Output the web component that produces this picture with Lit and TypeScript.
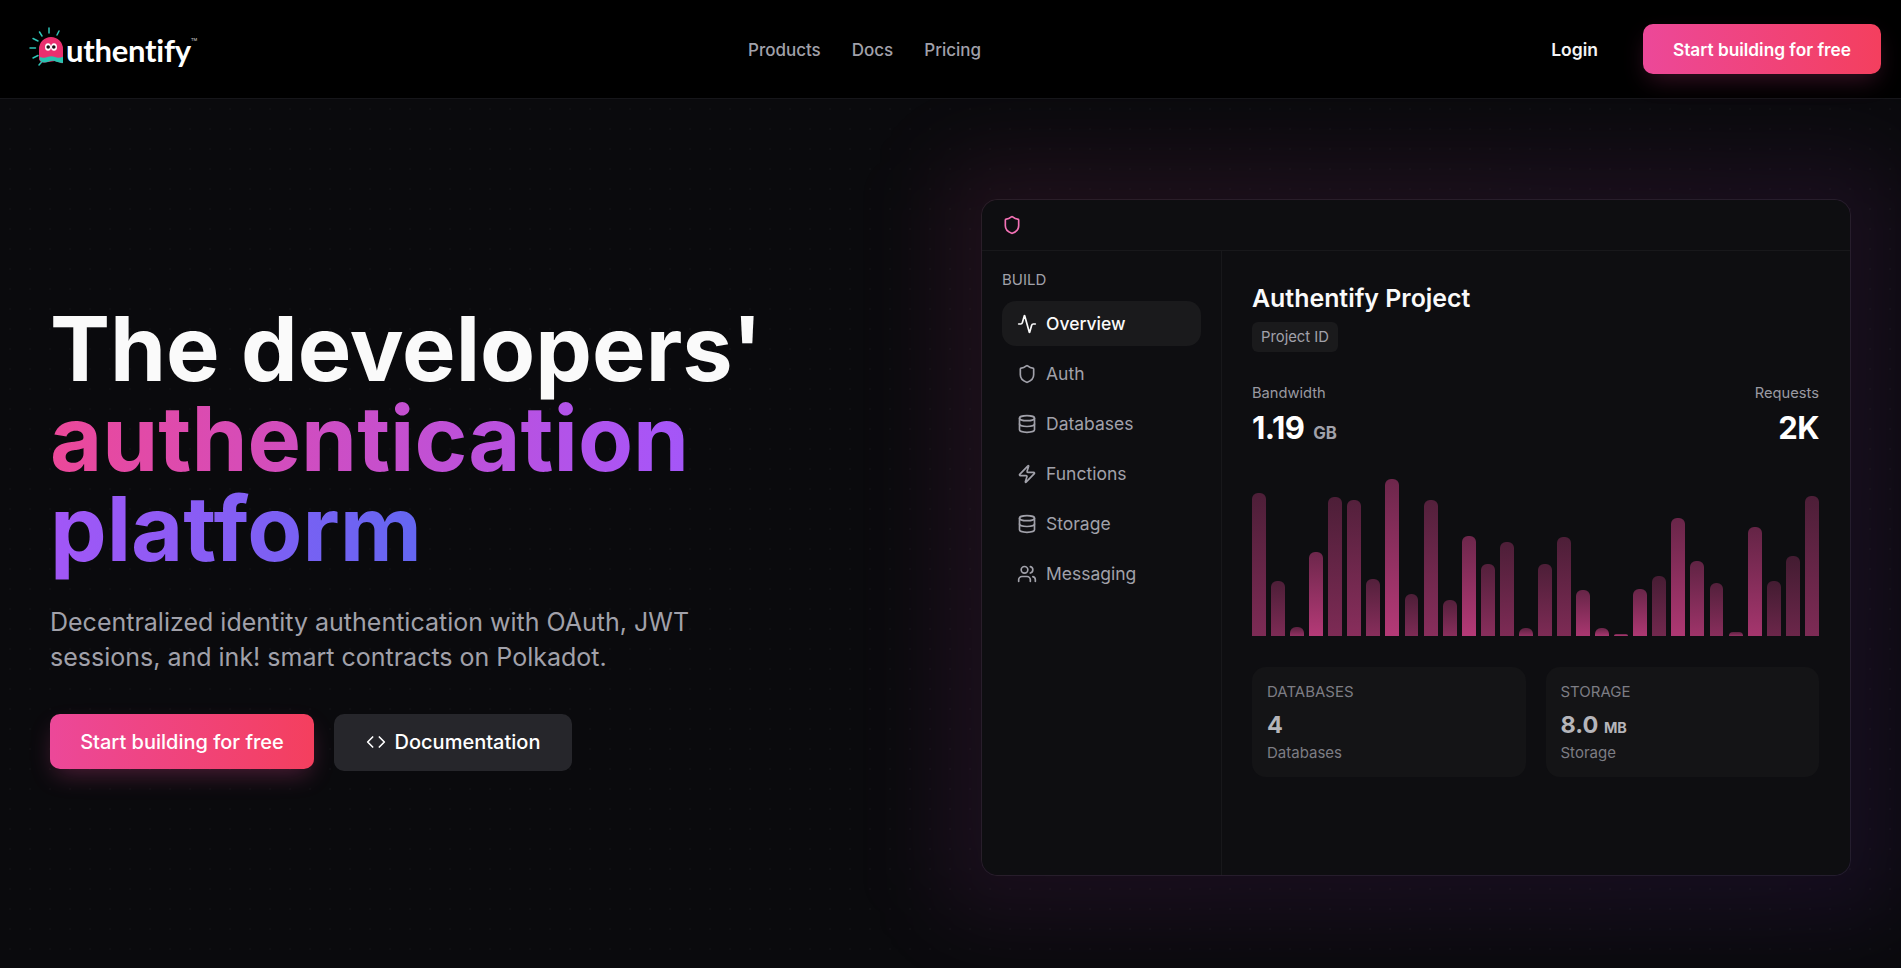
import { LitElement, html, css, svg } from "lit";
import { customElement } from "lit/decorators.js";

const FONT = css`Inter, "Noto Sans", sans-serif`;

const icon = (paths: unknown, size = 18) => html`<svg class="ic" width=${size} height=${size} viewBox="0 0 24 24" fill="none" stroke="currentColor" stroke-width="2" stroke-linecap="round" stroke-linejoin="round">${paths}</svg>`;

const shield = svg`<path d="M20 13c0 5-3.5 7.5-7.66 8.95a1 1 0 0 1-.67-.01C7.5 20.5 4 18 4 13V6a1 1 0 0 1 1-1c2 0 4.5-1.2 6.24-2.72a1.17 1.17 0 0 1 1.52 0C14.51 3.81 17 5 19 5a1 1 0 0 1 1 1z"/>`;
const activity = svg`<path d="M22 12h-2.48a2 2 0 0 0-1.93 1.46l-2.35 8.36a.25.25 0 0 1-.48 0L9.24 2.18a.25.25 0 0 0-.48 0l-2.35 8.36A2 2 0 0 1 4.49 12H2"/>`;
const db = svg`<ellipse cx="12" cy="5" rx="9" ry="3"/><path d="M3 5v14a9 3 0 0 0 18 0V5"/><path d="M3 12a9 3 0 0 0 18 0"/>`;
const zap = svg`<path d="M4 14a1 1 0 0 1-.78-1.63l9.9-10.2a.5.5 0 0 1 .86.46l-1.92 6.02A1 1 0 0 0 13 10h7a1 1 0 0 1 .78 1.63l-9.9 10.2a.5.5 0 0 1-.86-.46l1.92-6.02A1 1 0 0 0 11 14z"/>`;
const users = svg`<path d="M16 21v-2a4 4 0 0 0-4-4H6a4 4 0 0 0-4 4v2"/><circle cx="9" cy="7" r="4"/><path d="M22 21v-2a4 4 0 0 0-3-3.87"/><path d="M16 3.13a4 4 0 0 1 0 7.75"/>`;
const code = svg`<path d="m16 18 6-6-6-6"/><path d="m8 6-6 6 6 6"/>`;

const nav = [
  ["Overview", activity],
  ["Auth", shield],
  ["Databases", db],
  ["Functions", zap],
  ["Storage", db],
  ["Messaging", users],
] as const;

// [bar height in px, opacity]
const bars: [number, number][] = [
  [143, 0.5], [55, 0.5], [9, 0.6], [84, 0.75], [139, 0.5], [136, 0.55], [57, 0.55], [157, 0.75], [42, 0.5], [136, 0.55],
  [36, 0.55], [100, 0.75], [72, 0.55], [94, 0.5], [8, 0.6], [72, 0.5], [99, 0.5], [46, 0.7], [8, 0.7], [2, 0.75],
  [47, 0.72], [60, 0.45], [118, 0.72], [75, 0.65], [53, 0.55], [4, 0.6], [109, 0.68], [55, 0.42], [80, 0.42], [140, 0.5],
];

@customElement("app-logo")
export class AppLogo extends LitElement {
  static styles = css`
    :host { display: inline-flex; align-items: flex-start; color: #fff; height: 42px; width: 170px; margin-top: 1px; }
    svg { flex: none; }
    .word { font: 700 31px/1 Lato, ${FONT}; letter-spacing: -0.25px; margin: 8px 0 0 1px; }
    .tm { font: 500 4px/1 ${FONT}; color: #bbb; margin: 11px 0 0 0; }
  `;
  render() {
    return html`<svg width="37" height="42" viewBox="0 0 37 42" fill="none">
        <g stroke="#2ec4b6" stroke-width="1.5" stroke-linecap="round">
          <path d="M2 21h5.500M5 11.500l5 2.500M11.500 5l2.500 4M21 1v5M31 4l-2 4M5 31l5-2.500M11 38l3.500-4" />
        </g>
        <path d="M11 22a12 12 0 0 1 24 0V35.500c0 .5-.5 .8-1 .7l-7-2.200-10 1.500C13.500 36 11 34 11 31.500z" fill="#ea2f6f"/>
        <path d="M12 30c3 1.500 5.500 .5 8-.3 3-1 5-.5 7 .3 2.500 1 5.500 .8 8-.2V36c-3-.2-6-1-8.500-2-4-1.200-6.500 1.600-10.500 1.600-2 0-3.500-1-4.500-3z" fill="#27c3b0"/>
        <ellipse cx="20" cy="20" rx="3" ry="3.800" fill="#fff"/><ellipse cx="26" cy="20" rx="3" ry="3.800" fill="#fff"/>
        <circle cx="20.200" cy="20" r="1.800" fill="#1c1116"/><circle cx="25.800" cy="20" r="1.800" fill="#1c1116"/>
      </svg><span class="word">uthentify</span><span class="tm">TM</span>`;
  }
}

@customElement("app-root")
export class AppRoot extends LitElement {
  static styles = css`
    :host { display: block; width: 100%; height: 968px; overflow: hidden; background: #0a0a0d; font-family: ${FONT}; color: #fff; }
    * { box-sizing: border-box; }
    header { position: relative; z-index: 2; height: 99px; background: #000; border-bottom: 1px solid #16161a; display: grid; grid-template-columns: 720px auto 1fr; align-items: center; padding: 0 20px 0 28px; }
    .links { display: flex; gap: 31px; font-size: 17px; font-weight: 500; color: #a1a1aa; padding-top: 1px; }
    .right { display: flex; justify-content: flex-end; align-items: center; gap: 45px; }
    .login { font-size: 17.5px; font-weight: 600; color: #f4f4f5; }
    .btn { display: inline-flex; align-items: center; justify-content: center; border-radius: 10px; font-weight: 600; color: #fff; }
    .primary { background: linear-gradient(90deg, #ec4899, #f43f5e); box-shadow: 0 10px 25px -5px rgba(236, 72, 153, .25); }
    .nav-btn { width: 238px; height: 50px; font-size: 17.3px; }
    .hero { position: relative; height: 869px; display: grid; grid-template-columns: 931px 1fr; padding-left: 50px; padding-right: 50px; overflow: hidden; background:
      radial-gradient(rgba(255,255,255,.018) 1px, transparent 1px) 0 0/20px 20px,
      #0a0a0d; }
    .copy { padding-top: 205px; position: relative; }
    h1 { margin: 0; font-size: 90px; line-height: 90px; font-weight: 750; letter-spacing: 0; color: #fafafa; white-space: nowrap; }
    .grad { background: linear-gradient(90deg, #ec4899, #a855f7 60%, #6366f1); -webkit-background-clip: text; background-clip: text; color: transparent; }
    .sub { margin: 31px 0 0; font-size: 25px; line-height: 35px; color: #a1a1aa; width: 700px; }
    .cta { display: flex; gap: 20px; margin-top: 39px; align-items: flex-start; }
    .cta .btn { font-weight: 500; font-size: 20px; }
    .cta .primary { width: 264px; height: 55px; box-shadow: 0 10px 25px -5px rgba(236, 72, 153, .3); }
    .secondary { width: 238px; height: 57px; padding-bottom: 2px; background: #26262b; gap: 9px; }
    .panel { position: relative; margin-top: 100px; width: 870px; height: 677px; border: 1px solid #1c1c20; border-radius: 16px; background: #0e0e11; display: flex; flex-direction: column; }
    .glow { position: absolute; inset: -45px; border-radius: 40px; background: linear-gradient(135deg, rgba(236, 72, 153, .085), rgba(139, 50, 230, .085)); filter: blur(40px); z-index: 0; }
    .layer { position: relative; z-index: 1; background: #0e0e11; }
    .panel-top { height: 51px; border-bottom: 1px solid #18181b; display: flex; align-items: center; padding-left: 20px; color: #f472b6; flex: none; border-radius: 16px 16px 0 0; }
    .panel-body { flex: 1; display: grid; grid-template-columns: 240px 1fr; border-radius: 0 0 16px 16px; }
    aside { border-right: 1px solid #18181b; padding: 19px 20px 0; }
    .label { font-size: 15px; line-height: 20px; color: #a1a1aa; margin-bottom: 11px; }
    .items { display: flex; flex-direction: column; gap: 5px; }
    .item { height: 45px; border-radius: 14px; display: flex; align-items: center; gap: 9px; padding-left: 15px; font-size: 17.5px; color: #a1a1aa; }
    .item.on { background: #1a1a1c; color: #fafafa; font-weight: 500; }
    .main { padding: 31px 31px 0 30px; }
    h2 { margin: 0; font-size: 24.9px; line-height: 32px; font-weight: 600; color: #fafafa; }
    .chip { display: inline-block; margin-top: 8px; padding: 0 9px; height: 30px; line-height: 30px; font-size: 14.8px; color: #a1a1aa; background: #1a1a1c; border-radius: 6px; }
    .stats { display: flex; justify-content: space-between; margin-top: 31px; }
    .stat-r { text-align: right; }
    .muted { font-size: 14.7px; line-height: 20px; color: #9a9aa2; }
    .big { font-size: 31px; line-height: 36px; font-weight: 700; margin-top: 7px; letter-spacing: -.5px; }
    .big small { font-size: 16.8px; color: #a1a1aa; letter-spacing: 0; margin-left: 2px; }
    .chart { margin-top: 25px; height: 160px; display: flex; align-items: flex-end; gap: 5.1px; }
    .bar { flex: 1; border-radius: 6px 6px 0 0; background: linear-gradient(0deg, #ec4899, rgba(236, 72, 153, .57)); }
    .cards { display: grid; grid-template-columns: 1fr 1fr; gap: 20px; margin-top: 31px; }
    .card { height: 110px; border-radius: 14px; background: #141416; padding: 15px 15px 0; color: #7d7d84; font-size: 15px; line-height: 20px; }
    .val { font-size: 23.5px; line-height: 32px; height: 32px; font-weight: 700; color: #b5b5ba; margin: 7px 0 2px; }
    .val small { font-size: 14.4px; }
  `;
  render() {
    return html`
      <header>
        <div><app-logo></app-logo></div>
        <nav class="links"><span>Products</span><span>Docs</span><span>Pricing</span></nav>
        <div class="right"><span class="login">Login</span><span class="btn primary nav-btn">Start building for free</span></div>
      </header>
      <section class="hero">
        <div class="copy">
          <h1>The developers'<br /><span class="grad">authentication<br />platform</span></h1>
          <p class="sub">Decentralized identity authentication with OAuth, JWT sessions, and ink! smart contracts on Polkadot.</p>
          <div class="cta">
            <span class="btn primary">Start building for free</span>
            <span class="btn secondary">${icon(code, 20)}Documentation</span>
          </div>
        </div>
        <div class="panel">
          <div class="glow"></div>
          <div class="panel-top layer">${icon(shield, 20)}</div>
          <div class="panel-body layer">
            <aside>
              <div class="label">BUILD</div>
              <div class="items">
                ${nav.map(([n, i], k) => html`<div class="item ${k === 0 ? "on" : ""}">${icon(i, 20)}${n}</div>`)}
              </div>
            </aside>
            <div class="main">
              <h2>Authentify Project</h2>
              <span class="chip">Project ID</span>
              <div class="stats">
                <div><div class="muted">Bandwidth</div><div class="big">1.19 <small>GB</small></div></div>
                <div class="stat-r"><div class="muted">Requests</div><div class="big">2K</div></div>
              </div>
              <div class="chart">
                ${bars.map(([h, o]) => html`<div class="bar" style="height:${h}px;opacity:${o}"></div>`)}
              </div>
              <div class="cards">
                <div class="card">DATABASES<div class="val">4</div>Databases</div>
                <div class="card">STORAGE<div class="val">8.0 <small>MB</small></div>Storage</div>
              </div>
            </div>
          </div>
        </div>
      </section>
    `;
  }
}
